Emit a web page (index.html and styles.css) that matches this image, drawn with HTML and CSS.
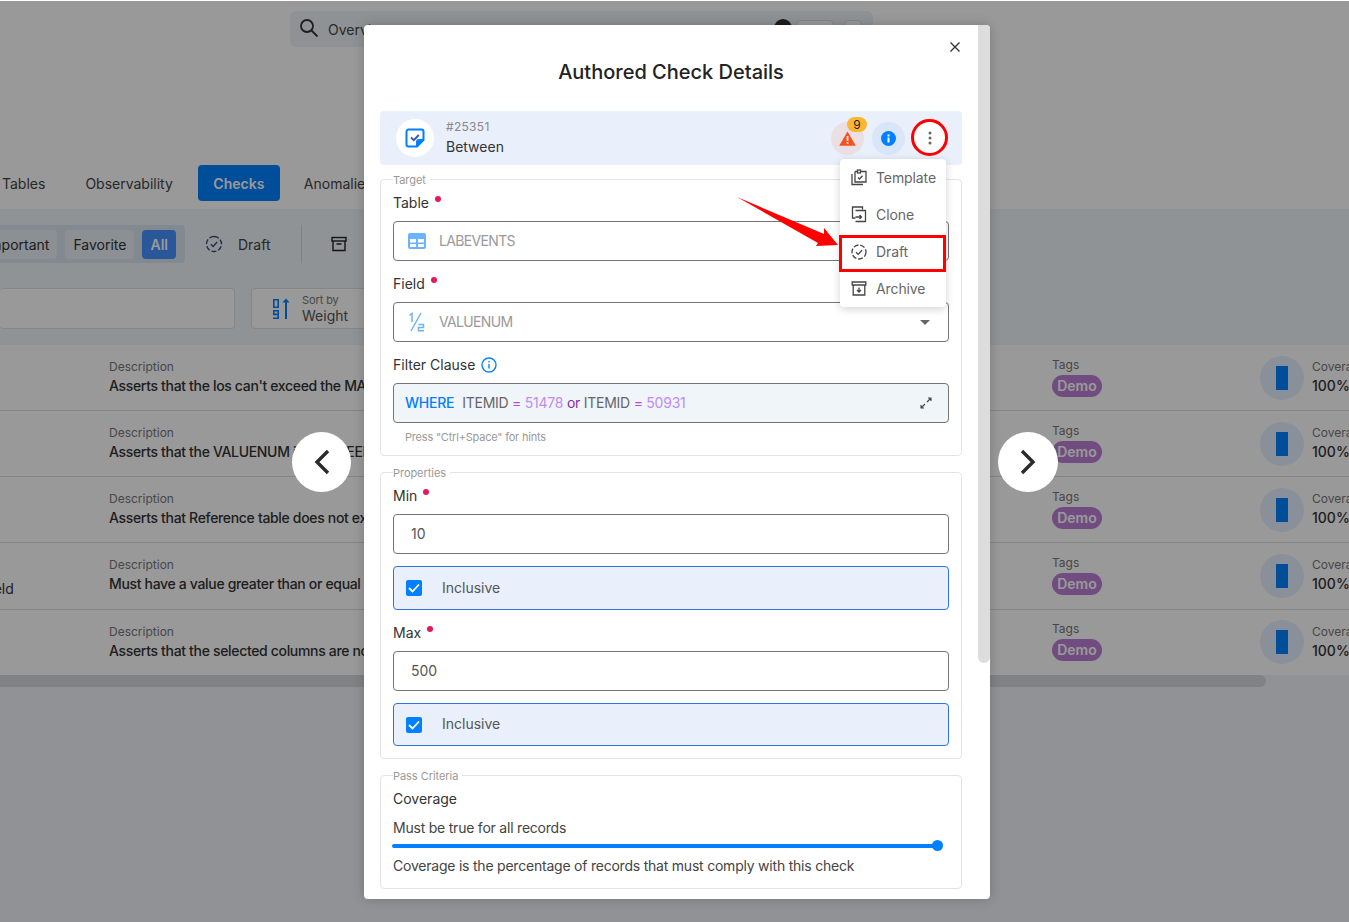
FILE: index.html
```html
<!DOCTYPE html>
<html lang="en">
<head>
    <meta charset="UTF-8">
    <title>Authored Check Details</title>
    <link rel="stylesheet" href="styles.css">
</head>
<body>
    <div class="app">
        <header class="topbar">
            <div class="search">
                <svg class="search-icon" width="20" height="20" viewBox="0 0 20 20" fill="none" stroke="#333" stroke-width="1.8"><circle cx="8" cy="8" r="6"/><path d="M12.5 12.5L18.5 18.5"/></svg>
                <span>Overview</span>
                <i class="search-dot"></i>
                <i class="search-key"></i>
                <i class="search-key small"></i>
            </div>
        </header>

        <nav class="tabs">
            <span class="tab">Tables</span>
            <span class="tab">Observability</span>
            <span class="tab active">Checks</span>
            <span class="tab">Anomalies</span>
        </nav>

        <section class="filters">
            <div class="filter-row">
                <div class="pill-group">
                    <span class="pill first">Important</span>
                    <span class="pill">Favorite</span>
                    <span class="pill on">All</span>
                </div>
                <svg class="draft-icon" width="18" height="18" viewBox="0 0 18 18" fill="none" stroke="#3a4a78" stroke-width="1.4"><path d="M9 1.5a7.5 7.5 0 1 1 0 15a7.5 7.5 0 1 1 0-15" stroke-dasharray="5 2"/><path d="M5.8 9.2l2.3 2.2 4-4.4"/></svg>
                <span class="filter-label">Draft</span>
                <i class="filter-divider"></i>
                <svg class="archive-icon" width="16" height="16" viewBox="0 0 16 16" fill="none" stroke="#222" stroke-width="1.4"><rect x="1" y="1.5" width="14" height="3.5"/><path d="M2 5v9.5h12V5M5.5 8h5"/></svg>
            </div>
            <div class="sort-row">
                <div class="search-field"></div>
                <div class="sort-box">
                    <svg width="20" height="22" viewBox="0 0 20 22" fill="#0080ff"><path d="M1 1h6v9H1zM2.6 2.6v5.8h2.8V2.6zM1 12h6v9H1v-1.6h4.4v-2.2H1zM2.6 13.6v2h2.8v-2z" fill-rule="evenodd"/><path d="M13 21V4.5h-2.600L14 .5l3.600 4H15V21z"/></svg>
                    <div class="sort-text"><small>Sort by</small><span>Weight</span></div>
                </div>
            </div>
        </section>

        <section class="rows">
            <div class="row">
                <div class="row-name"></div>
                <div class="row-desc"><small>Description</small><span>Asserts that the los can't exceed the MAX value for admissions</span></div>
                <div class="row-tags"><small>Tags</small><b>Demo</b></div>
                <div class="row-cover"><i class="gauge"><i></i></i><div><small>Coverage</small><span>100%</span></div></div>
            </div>
            <div class="row">
                <div class="row-name"></div>
                <div class="row-desc"><small>Description</small><span>Asserts that the VALUENUM is BETWEEN limits</span></div>
                <div class="row-tags"><small>Tags</small><b>Demo</b></div>
                <div class="row-cover"><i class="gauge"><i></i></i><div><small>Coverage</small><span>100%</span></div></div>
            </div>
            <div class="row">
                <div class="row-name"></div>
                <div class="row-desc"><small>Description</small><span>Asserts that Reference table does not exist</span></div>
                <div class="row-tags"><small>Tags</small><b>Demo</b></div>
                <div class="row-cover"><i class="gauge"><i></i></i><div><small>Coverage</small><span>100%</span></div></div>
            </div>
            <div class="row tall">
                <div class="row-name"><span>Field</span></div>
                <div class="row-desc"><small>Description</small><span>Must have a value greater than or equal to zero</span></div>
                <div class="row-tags"><small>Tags</small><b>Demo</b></div>
                <div class="row-cover"><i class="gauge"><i></i></i><div><small>Coverage</small><span>100%</span></div></div>
            </div>
            <div class="row">
                <div class="row-name"></div>
                <div class="row-desc"><small>Description</small><span>Asserts that the selected columns are not null</span></div>
                <div class="row-tags"><small>Tags</small><b>Demo</b></div>
                <div class="row-cover"><i class="gauge"><i></i></i><div><small>Coverage</small><span>100%</span></div></div>
            </div>
        </section>
        <div class="hscroll"><i></i></div>
    </div>

    <div class="backdrop"></div>

    <button class="nav-btn prev">
        <svg width="18" height="26" viewBox="0 0 18 26" fill="none" stroke="#2b2b2b" stroke-width="3.4"><path d="M15 2L4 13l11 11"/></svg>
    </button>
    <button class="nav-btn next">
        <svg width="18" height="26" viewBox="0 0 18 26" fill="none" stroke="#2b2b2b" stroke-width="3.4"><path d="M3 2l11 11L3 24"/></svg>
    </button>

    <div class="modal">
        <div class="modal-body">
            <h2>Authored Check Details</h2>

            <div class="check-head">
                <span class="check-icon">
                    <svg width="20" height="20" viewBox="0 0 20 20" fill="none" stroke="#0080ff" stroke-width="2"><path d="M12 18.500H3.500a2 2 0 0 1-2-2V3.500a2 2 0 0 1 2-2h13a2 2 0 0 1 2 2V12z" stroke-linejoin="round"/><path d="M18.500 12h-4.500a2 2 0 0 0-2 2v4.500" fill="#0080ff"/><path d="M6 9.500l2.800 2.700 5-5.200" stroke="#3a5ac0"/></svg>
                </span>
                <div class="check-title">
                    <small>#25351</small>
                    <span>Between</span>
                </div>
                <div class="check-actions">
                    <span class="round warn">
                        <svg width="17" height="15" viewBox="0 0 17 15"><path d="M8.500 0.500L16.800 14.800H0.200z" fill="#f4511e"/><rect x="7.700" y="5" width="1.700" height="5" fill="#fff"/><rect x="7.700" y="11" width="1.700" height="1.700" fill="#fff"/></svg>
                        <b class="badge">9</b>
                    </span>
                    <span class="round info">
                        <svg width="15" height="15" viewBox="0 0 15 15"><circle cx="7.500" cy="7.500" r="7.500" fill="#0080ff"/><rect x="6.500" y="6.500" width="2" height="5" fill="#fff"/><rect x="6.500" y="3.500" width="2" height="2" fill="#fff"/></svg>
                    </span>
                    <span class="round more">
                        <svg width="4" height="14" viewBox="0 0 4 14" fill="#666"><circle cx="2" cy="2" r="1.500"/><circle cx="2" cy="7" r="1.500"/><circle cx="2" cy="12" r="1.500"/></svg>
                    </span>
                </div>
            </div>

            <fieldset class="group target">
                <legend>Target</legend>
                <label class="field-label">Table<i class="req"></i></label>
                <div class="input">
                    <svg class="input-icon" width="18" height="16" viewBox="0 0 18 16"><path d="M2 0h14a2 2 0 0 1 2 2v12a2 2 0 0 1-2 2H2a2 2 0 0 1-2-2V2a2 2 0 0 1 2-2zM2 6v3.500h6V6zM10 6v3.500h6V6zM2 11v3h6v-3zM10 11v3h6v-3z" fill="#6cb3fb" fill-rule="evenodd"/></svg>
                    <span class="muted">LABEVENTS</span>
                </div>
                <label class="field-label">Field<i class="req"></i></label>
                <div class="input">
                    <svg class="input-icon" width="18" height="20" viewBox="0 0 18 20" fill="none" stroke="#6cb3fb" stroke-width="1.500"><path d="M1.500 3.500L4 1.500V10M13 1L3 19M10.500 12.500h5v3h-5v3.300h5.500"/></svg>
                    <span class="muted">VALUENUM</span>
                    <i class="caret"></i>
                </div>
                <label class="field-label">Filter Clause
                    <svg class="label-info" width="16" height="16" viewBox="0 0 16 16" fill="none" stroke="#0a84f5" stroke-width="1.400"><circle cx="8" cy="8" r="7"/><path d="M8 7v4.500M8 4v1.500"/></svg>
                </label>
                <div class="input code">
                    <b>WHERE</b>
                    <span>ITEMID <em>=</em> <u>51478</u> <q>or</q> ITEMID <em>=</em> <u>50931</u></span>
                    <svg class="expand" width="12" height="12" viewBox="0 0 12 12" fill="none" stroke="#444" stroke-width="1.100"><path d="M7 5l4-4M8 1h3v3M5 7l-4 4M1 8v3h3"/></svg>
                </div>
                <p class="hint">Press "Ctrl+Space" for hints</p>
            </fieldset>

            <fieldset class="group props">
                <legend>Properties</legend>
                <label class="field-label">Min<i class="req"></i></label>
                <div class="input"><span class="value">10</span></div>
                <div class="check-row"><i class="box"><svg width="12" height="10" viewBox="0 0 12 10" fill="none" stroke="#fff" stroke-width="1.800"><path d="M1 5l3.500 3.500L11 1.500"/></svg></i><span>Inclusive</span></div>
                <label class="field-label">Max<i class="req"></i></label>
                <div class="input"><span class="value">500</span></div>
                <div class="check-row short"><i class="box"><svg width="12" height="10" viewBox="0 0 12 10" fill="none" stroke="#fff" stroke-width="1.800"><path d="M1 5l3.500 3.500L11 1.500"/></svg></i><span>Inclusive</span></div>
            </fieldset>

            <fieldset class="group pass">
                <legend>Pass Criteria</legend>
                <label class="field-label">Coverage</label>
                <p class="must">Must be true for all records</p>
                <div class="slider"><i></i></div>
                <p class="note">Coverage is the percentage of records that must comply with this check</p>
            </fieldset>
        </div>

        <i class="modal-scroll"></i>
        <button class="close">
            <svg width="10" height="10" viewBox="0 0 10 10" stroke="#333" stroke-width="1.400"><path d="M0.500 0.500l9 9M9.500 0.500l-9 9"/></svg>
        </button>

        <div class="menu">
            <div class="menu-item">
                <svg width="16" height="17" viewBox="0 0 16 17" fill="none" stroke="#444" stroke-width="1.300"><path d="M1 5v10.500h11"/><path d="M4 2.500h2.500M9.500 2.500H15V13H4V2.500"/><rect x="6.500" y="1" width="3" height="3"/><path d="M7 8.500l1.500 1.500 3-3.200"/></svg>
                <span>Template</span>
            </div>
            <div class="menu-item">
                <svg width="15" height="17" viewBox="0 0 15 17" fill="none" stroke="#444" stroke-width="1.300"><path d="M11 3.500V1H1v11h3"/><path d="M4 4.500h10v11H4"/><path d="M4 11h6M8 9l2 2-2 2" /></svg>
                <span>Clone</span>
            </div>
            <div class="menu-item">
                <svg width="16" height="16" viewBox="0 0 16 16" fill="none" stroke="#444" stroke-width="1.300"><circle cx="8" cy="8" r="7" stroke-dasharray="5 1.800"/><path d="M5 8.200l2.200 2.200 3.800-4.200"/></svg>
                <span>Draft</span>
            </div>
            <div class="menu-item">
                <svg width="15" height="15" viewBox="0 0 15 15" fill="none" stroke="#444" stroke-width="1.300"><path d="M0.700 1h13.600v3H0.700zM1.700 4v10h11.600V4"/><path d="M7.500 6.500v4.500M5.500 9l2 2 2-2" /></svg>
                <span>Archive</span>
            </div>
        </div>

        <i class="mark-circle"></i>
        <i class="mark-rect"></i>
        <svg class="mark-arrow" width="102" height="52" viewBox="0 0 102 52"><path d="M0 0L87 37L87 31L101 48L79 49L81 46z" fill="#f00"/></svg>
    </div>
</body>
</html>
```

FILE: styles.css
```css
* {
    box-sizing: border-box;
}
html, body {
    margin: 0;
    height: 100%;
    overflow: hidden;
}
body {
    font-family: 'Inter', sans-serif;
    color: #333;
    background-color: #fff;
}
small {
    display: block;
    font-size: 12px;
    font-weight: 400;
    color: #777;
}
i {
    display: block;
}

/* page behind the dialog */
.app {
    width: 1349px;
    height: 922px;
    overflow: hidden;
    background-color: #f0f4f8;
}
.topbar {
    height: 57px;
    padding: 11px 0 0 290px;
    background-color: #fff;
    box-shadow: 0 2px 5px rgba(0, 0, 0, .2);
}
.search {
    display: flex;
    align-items: center;
    width: 583px;
    height: 36px;
    padding: 0 11px 0 9px;
    border-radius: 6px;
    background-color: #eef3f8;
    font-size: 14px;
    color: #444;
}
.search-icon {
    margin: -2px 9px 0 0;
}
.search-dot {
    width: 18px;
    height: 18px;
    margin: -2px 0 0 auto;
    border-radius: 50%;
    background-color: #333;
}
.search-key {
    width: 38px;
    height: 18px;
    margin-left: 4px;
    border: 1px solid #ddd;
    border-radius: 5px;
    background-color: #fff;
}
.search-key.small {
    width: 18px;
    margin-left: 10px;
}
.tabs {
    display: flex;
    align-items: center;
    height: 152px;
    padding: 108px 0 8px 2px;
    background-color: #fff;
    font-size: 14px;
    color: #444;
}
.tab {
    height: 36px;
    line-height: 38px;
    margin-right: 40px;
    white-space: nowrap;
}
.tab.active {
    width: 82px;
    margin: 0 24px 0 -15px;
    border-radius: 4px;
    background-color: #0080ff;
    color: #fff;
    font-weight: 600;
    text-align: center;
}
.filters {
    height: 136px;
    padding-top: 16px;
    background-color: #f0f5fa;
}
.filter-row {
    display: flex;
    align-items: center;
    height: 38px;
}
.pill-group {
    display: flex;
    align-items: center;
    width: 185px;
    height: 38px;
    gap: 8px;
    padding-right: 9px;
    justify-content: flex-end;
    border-radius: 0 4px 4px 0;
    background-color: #dbe4f0;
    overflow: hidden;
}
.pill {
    padding: 0 8px;
    line-height: 29px;
    border-radius: 4px;
    background-color: #e9eff7;
    font-size: 14px;
    color: #333;
    white-space: nowrap;
}
.pill.first {
    flex-shrink: 0;
}
.pill.on {
    background-color: #4691ff;
    color: #fff;
    font-weight: 600;
}
.draft-icon {
    margin: 0 15px 0 20px;
}
.filter-label {
    font-size: 14px;
    color: #444;
}
.filter-divider {
    width: 1px;
    height: 38px;
    margin: 0 29px 0 30px;
    background-color: #d4dbe3;
}
.sort-row {
    display: flex;
    gap: 16px;
    margin-top: 25px;
}
.search-field, .sort-box {
    height: 41px;
    border: 1px solid #dde1e6;
    border-radius: 4px;
    background-color: #fff;
}
.search-field {
    width: 235px;
    border-left: 0;
}
.sort-box {
    display: flex;
    align-items: center;
    gap: 10px;
    width: 200px;
    padding-left: 20px;
}
.sort-text small {
    margin-bottom: 1px;
    font-size: 11px;
    line-height: 12px;
    letter-spacing: -.1px;
}
.sort-text span {
    display: block;
    font-size: 14px;
    line-height: 17px;
    color: #555;
}
.rows {
    height: 330px;
    background-color: #fff;
}
.row {
    display: flex;
    height: 66px;
    border-bottom: 1px solid #ddd;
    font-size: 14px;
}
.row.tall {
    height: 67px;
}
.row:last-child {
    border-bottom: 0;
}
.row small {
    line-height: 16px;
}
.row-name {
    flex: 0 0 109px;
    padding-top: 37px;
    white-space: nowrap;
}
.row-name span {
    display: block;
    margin-left: -18px;
}
.row-desc {
    flex: 0 0 943px;
    padding-top: 14px;
    white-space: nowrap;
}
.row-desc span {
    display: block;
    margin-top: 1px;
    line-height: 20px;
    font-weight: 500;
    letter-spacing: -.33px;
}
.row-tags {
    flex: 0 0 208px;
    padding-top: 12px;
}
.row:last-child .row-tags {
    padding-top: 11px;
}
.row-tags b {
    display: block;
    width: 50px;
    margin-top: 2px;
    border-radius: 11px;
    background-color: #bb7fd5;
    color: #fff;
    font-weight: 600;
    line-height: 22px;
    text-align: center;
}
.row-cover {
    display: flex;
    gap: 8px;
    padding-top: 11px;
    white-space: nowrap;
}
.row:last-child .gauge {
    margin-top: -1px;
}
.row-cover span {
    display: block;
    margin-top: 1px;
    line-height: 20px;
    font-weight: 500;
}
.row-cover small {
    margin-top: 3px;
}
.gauge {
    display: flex;
    justify-content: center;
    align-items: center;
    width: 44px;
    height: 44px;
    border-radius: 50%;
    background-color: #e6f1ff;
}
.gauge i {
    width: 12px;
    height: 24px;
    background-color: #0080ff;
}
.hscroll {
    height: 12px;
}
.hscroll i {
    width: 1266px;
    height: 12px;
    border-radius: 0 6px 6px 0;
    background-color: #d8d9dc;
}
.backdrop {
    position: absolute;
    left: 0;
    right: 0;
    top: 1px;
    bottom: 0;
    background-color: rgba(0, 0, 0, .4);
}

/* arrows on either side of the dialog */
.nav-btn {
    position: absolute;
    top: 432px;
    display: flex;
    align-items: center;
    justify-content: center;
    width: 60px;
    height: 60px;
    padding: 0;
    border: none;
    border-radius: 50%;
    background-color: #fff;
}
.nav-btn.prev {
    left: 292px;
    width: 59px;
}
.nav-btn.next {
    left: 998px;
}

/* dialog */
.modal {
    position: absolute;
    left: 364px;
    top: 25px;
    width: 626px;
    height: 874px;
    border-radius: 4px;
    background-color: #fff;
    box-shadow: 0 0 12px rgba(0, 0, 0, .2);
}
.modal-body {
    height: 100%;
    padding: 0 28px 0 16px;
    overflow: hidden;
}
h2 {
    margin: 0;
    padding-top: 33px;
    height: 86px;
    font-size: 20px;
    line-height: 28px;
    font-weight: 500;
    text-align: center;
    color: #222;
}
.modal-scroll {
    position: absolute;
    right: 0;
    top: 0;
    width: 12px;
    height: 638px;
    border-radius: 0 4px 6px 6px;
    background-color: #ddd;
}
.close {
    position: absolute;
    left: 586px;
    top: 17px;
    width: 10px;
    height: 10px;
    padding: 0;
    border: none;
    background: none;
    line-height: 0;
}
.check-head {
    display: flex;
    align-items: center;
    height: 54px;
    padding-left: 16px;
    border-radius: 4px;
    background-color: #e9effb;
}
.check-icon {
    display: flex;
    align-items: center;
    justify-content: center;
    width: 38px;
    height: 38px;
    margin-right: 12px;
    border-radius: 50%;
    background-color: #fff;
}
.check-title small {
    margin-bottom: 2px;
    line-height: 16px;
    color: #888;
    letter-spacing: .3px;
}
.check-title span {
    display: block;
    font-size: 14px;
    line-height: 20px;
    color: #333;
}
.check-actions {
    display: flex;
    gap: 8px;
    margin-left: auto;
    padding-right: 16px;
}
.round {
    position: relative;
    display: flex;
    align-items: center;
    justify-content: center;
    width: 33px;
    height: 33px;
    border-radius: 50%;
}
.round.warn {
    background-color: #eadfe3;
}
.round.info {
    background-color: #d9e5f8;
}
.round.more {
    background-color: #fff;
}
.badge {
    position: absolute;
    right: -3px;
    top: -5px;
    width: 20px;
    height: 15px;
    border-radius: 8px;
    background-color: #fdb62f;
    color: #222;
    font-size: 12px;
    line-height: 15px;
    font-weight: 400;
    text-align: center;
}

/* form groups */
.group {
    margin: 7px 0 0;
    padding: 0 12px 11px;
    border: 1px solid #e3e4e6;
    border-radius: 4px;
    min-width: 0;
}
.group legend {
    padding: 2px 4px 0 0;
    font-size: 11px;
    line-height: 13px;
    color: #999;
    letter-spacing: -.05px;
}
.group.props {
    margin-top: 9px;
    padding-bottom: 12px;
}
.group.pass {
    margin-top: 9px;
    padding-bottom: 12px;
}
.field-label {
    display: flex;
    align-items: center;
    margin-bottom: 8px;
    font-size: 14px;
    line-height: 20px;
    color: #333;
}
.input + .field-label, .check-row + .field-label {
    margin-top: 13px;
}
.target > .field-label:first-of-type {
    margin-top: 6px;
}
.props > .field-label:first-of-type {
    margin: 6px 0 8px;
}
.req {
    width: 6px;
    height: 6px;
    margin: -8px 0 0 6px;
    border-radius: 50%;
    background-color: #e6175c;
}
.label-info {
    margin-left: 6px;
}
.input {
    display: flex;
    align-items: center;
    height: 40px;
    padding-left: 14px;
    border: 1px solid #757575;
    border-radius: 4px;
    font-size: 14px;
    line-height: 18px;
}
.input-icon {
    flex: 0 0 18px;
    margin-right: 13px;
}
.muted {
    color: #999;
    letter-spacing: -.65px;
}
.value {
    margin-top: -1px;
    padding-left: 3px;
    color: #555;
}
.caret {
    width: 0;
    height: 0;
    margin: 0 18px 0 auto;
    border-left: 5px solid transparent;
    border-right: 5px solid transparent;
    border-top: 5px solid #666;
}
.input.code {
    padding-left: 11px;
    background-color: #f0f5fa;
    letter-spacing: -.25px;
}
.code b {
    margin-right: 8px;
    color: #0080ff;
    font-weight: 500;
}
.code span {
    color: #666;
}
.code em {
    font-style: normal;
    color: #b44ad8;
}
.code u {
    text-decoration: none;
    color: #c08cf0;
}
.code q {
    quotes: none;
    color: #8a2aa8;
}
.expand {
    margin: 0 16px 0 auto;
}
.hint {
    margin: 7px 0 0 12px;
    font-size: 11px;
    line-height: 14px;
    color: #999;
    letter-spacing: -.2px;
}
.check-row {
    display: flex;
    align-items: center;
    height: 44px;
    margin-top: 12px;
    padding-left: 12px;
    border: 1px solid #2f73d9;
    border-radius: 4px;
    background-color: #e9f0fc;
    font-size: 14px;
    color: #555;
}
.check-row span {
    margin-top: -2px;
}
.check-row.short {
    height: 43px;
}
.box {
    display: flex;
    align-items: center;
    justify-content: center;
    width: 16px;
    height: 16px;
    margin-right: 20px;
    border-radius: 2px;
    background-color: #0080ff;
}
.must, .note {
    margin: 0;
    font-size: 14px;
    line-height: 20px;
    color: #444;
    letter-spacing: -.22px;
}
.pass .field-label {
    margin: 6px 0 9px;
}
.slider {
    position: relative;
    height: 4px;
    margin: 6px 12px 8px -1px;
    border-radius: 2px;
    background-color: #0080ff;
}
.slider i {
    position: absolute;
    right: -6px;
    top: -4px;
    width: 11px;
    height: 11px;
    border-radius: 50%;
    background-color: #0080ff;
}

/* actions menu, open over the form */
.menu {
    position: absolute;
    left: 476px;
    top: 134px;
    width: 106px;
    height: 148px;
    border-radius: 4px;
    background-color: #fff;
    box-shadow: 0 2px 8px rgba(0, 0, 0, .18);
}
.menu-item {
    display: flex;
    align-items: center;
    gap: 9px;
    height: 37px;
    padding-left: 11px;
    font-size: 14px;
    color: #666;
    letter-spacing: -.1px;
}
.menu-item svg {
    flex: 0 0 16px;
}

/* red annotations on the screenshot */
.mark-circle {
    position: absolute;
    left: 547px;
    top: 94px;
    width: 37px;
    height: 37px;
    border: 3px solid #f00;
    border-radius: 50%;
}
.mark-rect {
    position: absolute;
    left: 475px;
    top: 210px;
    width: 107px;
    height: 37px;
    border: 3px solid #f00;
}
.mark-arrow {
    position: absolute;
    left: 373px;
    top: 172px;
}
```
